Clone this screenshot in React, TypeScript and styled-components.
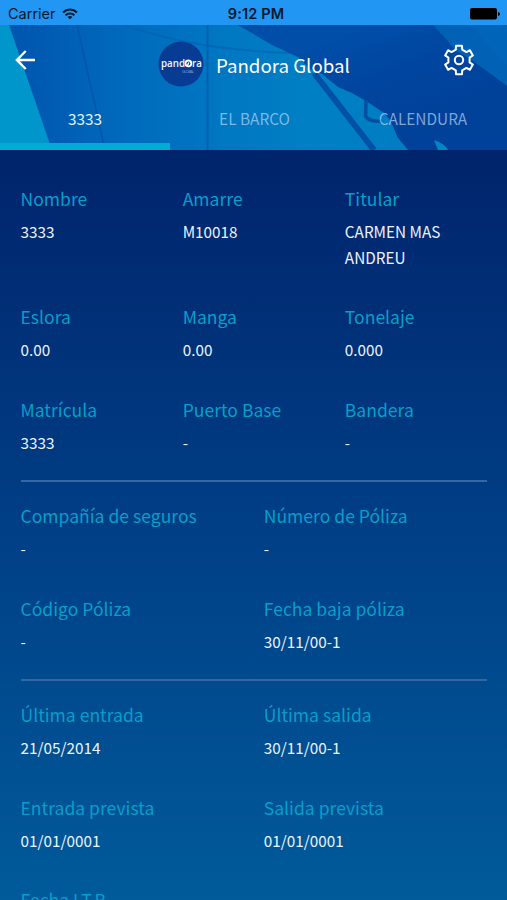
import React from 'react';
import styled, { createGlobalStyle } from 'styled-components';

const GlobalStyle = createGlobalStyle`
  * { box-sizing: border-box; }
  body {
    margin: 0;
    font-family: 'Noto Sans CJK SC', 'Open Sans', sans-serif;
    background: #00266e;
  }
`;

const Screen = styled.main`
  width: 100%;
  height: 900px;
  overflow: hidden;
  display: flex;
  flex-direction: column;
  background: #00266e;
`;

const StatusBar = styled.div`
  height: 25px;
  flex: none;
  display: grid;
  grid-template-columns: 1fr auto 1fr;
  align-items: center;
  padding: 2px 7px 0 8px;
  background: #2196f3;
  color: #07182c;
  font: 14.5px/20px Inter, sans-serif;
`;

const Carrier = styled.div`
  display: flex;
  align-items: center;
  gap: 6px;
`;

const Clock = styled.div`
  padding-left: 4px;
  font-weight: 600;
  letter-spacing: 0.15px;
`;

const BatterySlot = styled.div`
  display: flex;
  justify-content: flex-end;
`;

const Header = styled.header`
  position: relative;
  height: 125px;
  flex: none;
  display: flex;
  flex-direction: column;
  color: #fff;
`;

const Backdrop = styled.svg`
  position: absolute;
  inset: 0;
  width: 100%;
  height: 100%;
`;

const TitleBar = styled.div`
  position: relative;
  height: 68px;
  display: grid;
  grid-template-columns: 36px 1fr 36px;
  padding: 0 30px 0 14px;
`;

const IconButton = styled.button`
  display: flex;
  align-items: center;
  justify-content: center;
  width: 36px;
  height: 68px;
  border: 0;
  padding: 1px 0 0;
  background: none;
  color: inherit;
`;

const BackButton = styled(IconButton)`
  justify-content: flex-start;
`;

const Brand = styled.div`
  display: flex;
  align-items: center;
  gap: 12px;
  padding: 10px 0 0 108px;
`;

const Title = styled.h1`
  margin: 2px 0 0;
  font-size: 18.7px;
  line-height: 28px;
  font-weight: 400;
  white-space: nowrap;
`;

const Tabs = styled.nav`
  position: relative;
  flex: 1;
  display: grid;
  grid-template-columns: 170px 1fr 168px;
`;

const Tab = styled.button<{ $active?: boolean }>`
  border: 0;
  border-bottom: 7px solid ${(p) => (p.$active ? '#00acd3' : 'transparent')};
  padding: 0;
  background: none;
  color: ${(p) => (p.$active ? '#e6f3ff' : 'rgba(190, 220, 250, 0.66)')};
  font: inherit;
  font-size: 15.4px;
  line-height: 48px;
`;

const Content = styled.div`
  flex: 1;
  padding: 35.5px 0 0 20.5px;
  background: linear-gradient(#00246c, #003c83 44%, #005c9c);
`;

const Section = styled.section`
  & + & {
    padding-top: 20.5px;
  }
`;

const Row = styled.div<{ $columns: number }>`
  display: grid;
  grid-template-columns: repeat(${(p) => p.$columns}, 1fr);
  & + & {
    margin-top: 33.7px;
  }
`;

const Field = styled.div`
  padding-right: 20px;
`;

const Label = styled.div`
  color: #069fca;
  font-size: 17.5px;
  line-height: 26px;
  letter-spacing: 0.03px;
  white-space: nowrap;
`;

const Value = styled.div`
  margin-top: 7.5px;
  color: #edf3fc;
  font-size: 15.3px;
  line-height: 25.6px;
`;

const Divider = styled.hr`
  height: 2px;
  margin: 24.6px 20px 0 0;
  border: 0;
  background: #3667a5;
`;

const gearPath = (() => {
  const points: string[] = [];
  const at = (deg: number, r: number, w: number) => {
    const a = (deg * Math.PI) / 180;
    const x = Math.cos(a) * r - Math.sin(a) * w;
    const y = Math.sin(a) * r + Math.cos(a) * w;
    return `${x.toFixed(2)} ${y.toFixed(2)}`;
  };
  for (let k = 0; k < 6; k += 1) {
    const deg = -90 + k * 60;
    points.push(at(deg, 10.4, -3.2), at(deg, 14.3, -3), at(deg, 14.3, 3), at(deg, 10.4, 3.2));
  }
  return `M${points.join('L')}Z`;
})();

const GearIcon = () => (
  <svg width="34" height="34" viewBox="-17 -17 34 34" fill="none" stroke="currentColor" strokeWidth="2" strokeLinejoin="round">
    <path d={gearPath} />
    <circle r="4.2" />
  </svg>
);

const BackIcon = () => (
  <svg width="24" height="24" viewBox="0 0 24 24" fill="none" stroke="currentColor" strokeWidth="2.3">
    <path d="M21 12H3.2M11.8 3L2.8 12L11.8 21" />
  </svg>
);

const WifiIcon = () => (
  <svg width="16" height="12" viewBox="0 0 16 12" fill="none" stroke="currentColor" strokeWidth="2.1">
    <path d="M1 4.4C5 .6 11 .6 15 4.4M3.6 7.2C6 4.9 10 4.9 12.4 7.2" />
    <path d="M8 11.3L5.6 8.9C7 7.8 9 7.8 10.4 8.9Z" fill="currentColor" stroke="none" />
  </svg>
);

const BatteryIcon = () => (
  <svg width="30" height="12" viewBox="0 0 30 12">
    <rect width="27" height="11.5" rx="2" />
    <path d="M28 4Q30 4.5 30 6T28 8Z" />
  </svg>
);

const BrandLogo = () => (
  <svg width="46" height="46" viewBox="0 0 46 46">
    <circle cx="23" cy="23" r="22.5" fill="#073b94" />
    <g fill="#f2f7ff" fontFamily="'Open Sans', sans-serif" fontWeight="600" fontSize="10.5">
      <text x="3" y="25.5" textLength="24" lengthAdjust="spacingAndGlyphs">pand</text>
      <text x="34" y="25.5" textLength="9.8" lengthAdjust="spacingAndGlyphs">ra</text>
    </g>
    <circle cx="30.4" cy="22.4" r="2.9" fill="none" stroke="#fff" strokeWidth="1.8" />
    <path d="M29 25.4L30.8 21.5" stroke="#fff" strokeWidth="1.4" />
    <text x="24" y="32" fill="#7f9fd2" fontFamily="'Open Sans', sans-serif" fontSize="4" textLength="12">GLOBAL</text>
  </svg>
);

const SailBackdrop = () => (
  <Backdrop viewBox="0 0 507 125" preserveAspectRatio="none">
    <defs>
      <linearGradient id="sky" x1="0" x2="1">
        <stop offset="0.05" stopColor="#0057af" />
        <stop offset="0.2" stopColor="#0066b9" />
        <stop offset="0.4" stopColor="#0075c1" />
        <stop offset="0.6" stopColor="#007fc4" />
        <stop offset="1" stopColor="#007cc3" />
      </linearGradient>
      <linearGradient id="sail" gradientUnits="userSpaceOnUse" x1="370" y1="0" x2="410" y2="110">
        <stop offset="0" stopColor="#004ea8" />
        <stop offset="0.5" stopColor="#00459f" />
        <stop offset="1" stopColor="#004199" />
      </linearGradient>
    </defs>
    <rect width="507" height="125" fill="url(#sky)" />
    <path d="M0 0H9L52 125H0Z" fill="#0096cb" />
    <path d="M77 0L105 125" stroke="#0055a8" strokeWidth="1.6" />
    <path d="M125 0C180 20 240 27 300 28" fill="none" stroke="#0060b1" strokeWidth="2" opacity=".6" />
    <path d="M207.5 0V125" stroke="#005fae" strokeWidth="2" />
    <path d="M238 0H507V125H408L398 113L390 95L384 88L366 76L352 68L338 62L322 49L310 44L298 32L272 20Z" fill="url(#sail)" />
    <path d="M314 48L374 125" stroke="#0050a6" strokeWidth="6" />
    <path d="M433 0H507V61L495 52L484 44L470 34L455 25L446 14Z" fill="#0061b5" />
    <path d="M470 0H507V40Z" fill="#006bbd" opacity=".4" />
    <path d="M366 75L365.5 91Q369 97 382 96" fill="none" stroke="#00509f" strokeWidth="3.5" />
    <path d="M434 115Q444 118 448 125H438Z" fill="#0086c5" />
  </Backdrop>
);

type Item = [label: string, value: string];

const sections: Item[][][] = [
  [
    [['Nombre', '3333'], ['Amarre', 'M10018'], ['Titular', 'CARMEN MAS ANDREU']],
    [['Eslora', '0.00'], ['Manga', '0.00'], ['Tonelaje', '0.000']],
    [['Matrícula', '3333'], ['Puerto Base', '-'], ['Bandera', '-']],
  ],
  [
    [['Compañía de seguros', '-'], ['Número de Póliza', '-']],
    [['Código Póliza', '-'], ['Fecha baja póliza', '30/11/00-1']],
  ],
  [
    [['Última entrada', '21/05/2014'], ['Última salida', '30/11/00-1']],
    [['Entrada prevista', '01/01/0001'], ['Salida prevista', '01/01/0001']],
    [['Fecha I.T.B.', ''], ['', '']],
  ],
];

export default function App() {
  return (
    <Screen>
      <GlobalStyle />
      <StatusBar>
        <Carrier>Carrier <WifiIcon /></Carrier>
        <Clock>9:12 PM</Clock>
        <BatterySlot><BatteryIcon /></BatterySlot>
      </StatusBar>
      <Header>
        <SailBackdrop />
        <TitleBar>
          <BackButton aria-label="Volver"><BackIcon /></BackButton>
          <Brand>
            <BrandLogo />
            <Title>Pandora Global</Title>
          </Brand>
          <IconButton aria-label="Ajustes"><GearIcon /></IconButton>
        </TitleBar>
        <Tabs>
          <Tab $active>3333</Tab>
          <Tab>EL BARCO</Tab>
          <Tab>CALENDURA</Tab>
        </Tabs>
      </Header>
      <Content>
        {sections.map((rows, index) => (
          <Section key={index}>
            {rows.map((items, rowIndex) => (
              <Row key={rowIndex} $columns={items.length}>
                {items.map(([label, value], i) => (
                  <Field key={i}>
                    <Label>{label}</Label>
                    <Value>{value}</Value>
                  </Field>
                ))}
              </Row>
            ))}
            {index < sections.length - 1 && <Divider />}
          </Section>
        ))}
      </Content>
    </Screen>
  );
}
